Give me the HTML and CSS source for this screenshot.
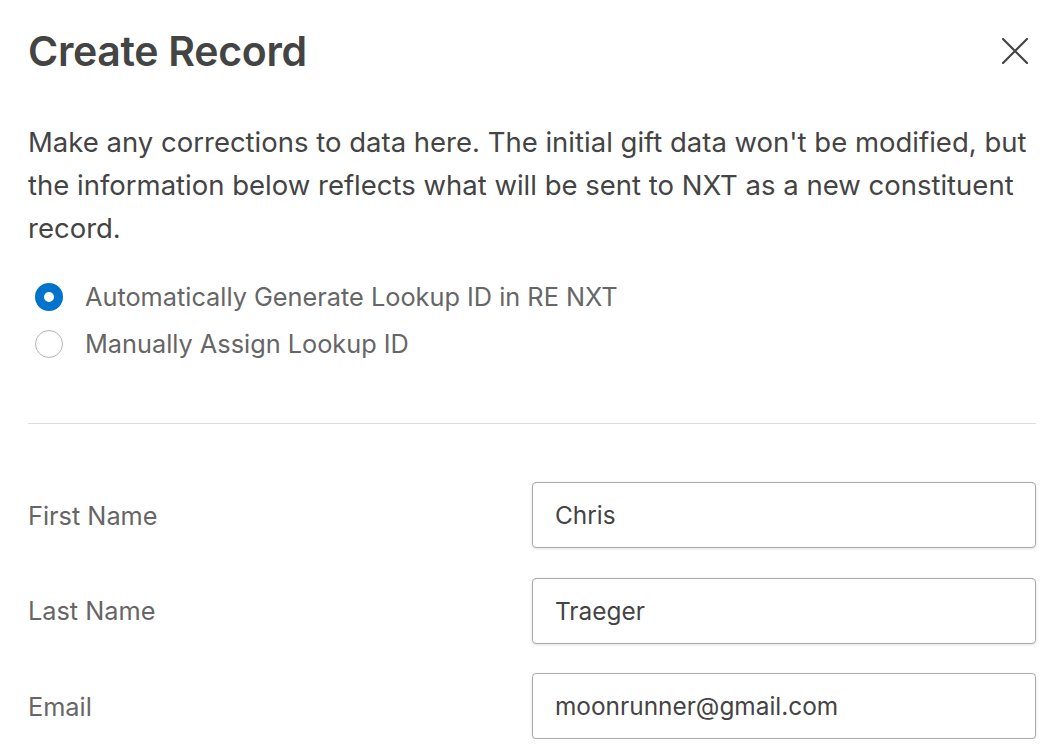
FILE: index.html
```html
<!DOCTYPE html>
<html lang="en">
<head>
    <meta charset="utf-8">
    <meta name="viewport" content="width=device-width, initial-scale=1.0">
    <title>Create Record</title>
    <link rel="stylesheet" href="styles.css">
</head>
<body>
    <div class="modal">
        <div class="modal-header">
            <h1>Create Record</h1>
            <button class="close" type="button" aria-label="Close">
                <svg width="26" height="26" viewBox="0 0 26 26">
                    <path d="M1 1 L25 25 M25 1 L1 25" stroke="#444" stroke-width="2.2" stroke-linecap="round" fill="none"/>
                </svg>
            </button>
        </div>

        <p class="intro">Make any corrections to data here. The initial gift data won't be modified, but the information below reflects what will be sent to NXT as a new constituent record.</p>

        <div class="options">
            <label class="option">
                <input type="radio" name="lookup" value="auto" checked>
                <span class="radio"></span>
                Automatically Generate Lookup ID in RE NXT
            </label>
            <label class="option">
                <input type="radio" name="lookup" value="manual">
                <span class="radio"></span>
                Manually Assign Lookup ID
            </label>
        </div>

        <hr class="divider">

        <div class="fields">
            <div class="field">
                <label for="firstname">First Name</label>
                <input type="text" id="firstname" value="Chris">
            </div>
            <div class="field">
                <label for="lastname">Last Name</label>
                <input type="text" id="lastname" value="Traeger">
            </div>
            <div class="field">
                <label for="email">Email</label>
                <input type="email" id="email" value="moonrunner@gmail.com">
            </div>
        </div>
    </div>
</body>
</html>
```

FILE: styles.css
```css
body {
    margin: 0;
    background-color: #fff;
    font-family: Inter, "Noto Sans", sans-serif;
    color: #444;
}
.modal {
    padding: 0 20px 0 28px;
}
.modal-header {
    display: flex;
    justify-content: space-between;
    align-items: center;
    padding-top: 24px;
    height: 54px;
}
h1 {
    margin: 0;
    font-size: 41px;
    font-weight: 600;
    color: #444;
    letter-spacing: -0.3px;
}
.close {
    border: none;
    background: none;
    padding: 0;
    margin-right: 8px;
    display: flex;
    cursor: pointer;
}
.intro {
    margin: 43px 0 0;
    font-size: 27.5px;
    line-height: 43px;
    color: #444;
}
.options {
    margin-top: 32px;
    display: flex;
    flex-direction: column;
    gap: 17px;
}
.option {
    display: flex;
    align-items: center;
    gap: 22px;
    font-size: 25.3px;
    line-height: 30px;
    color: #666;
    margin-left: 7px;
}
.option input {
    display: none;
}
.radio {
    width: 28px;
    height: 28px;
    box-sizing: border-box;
    border-radius: 50%;
    border: 1px solid #b5b5b5;
    background: #fff;
    flex-shrink: 0;
}
.option input:checked + .radio {
    border: 9px solid #0074cc;
}
.divider {
    border: none;
    border-top: 1px solid #ddd;
    margin: 64px 0 0;
}
.fields {
    margin-top: 58px;
    display: flex;
    flex-direction: column;
    gap: 29.5px;
}
.field {
    display: flex;
    align-items: center;
    justify-content: space-between;
}
.field label {
    font-size: 25.3px;
    color: #666;
}
.field input {
    width: 504px;
    height: 66px;
    box-sizing: border-box;
    border: 1px solid #aaa;
    border-radius: 4px;
    box-shadow: 0 1px 3px rgba(0, 0, 0, 0.12);
    padding: 0 22px;
    font-family: inherit;
    font-size: 24.4px;
    color: #444;
}
```
